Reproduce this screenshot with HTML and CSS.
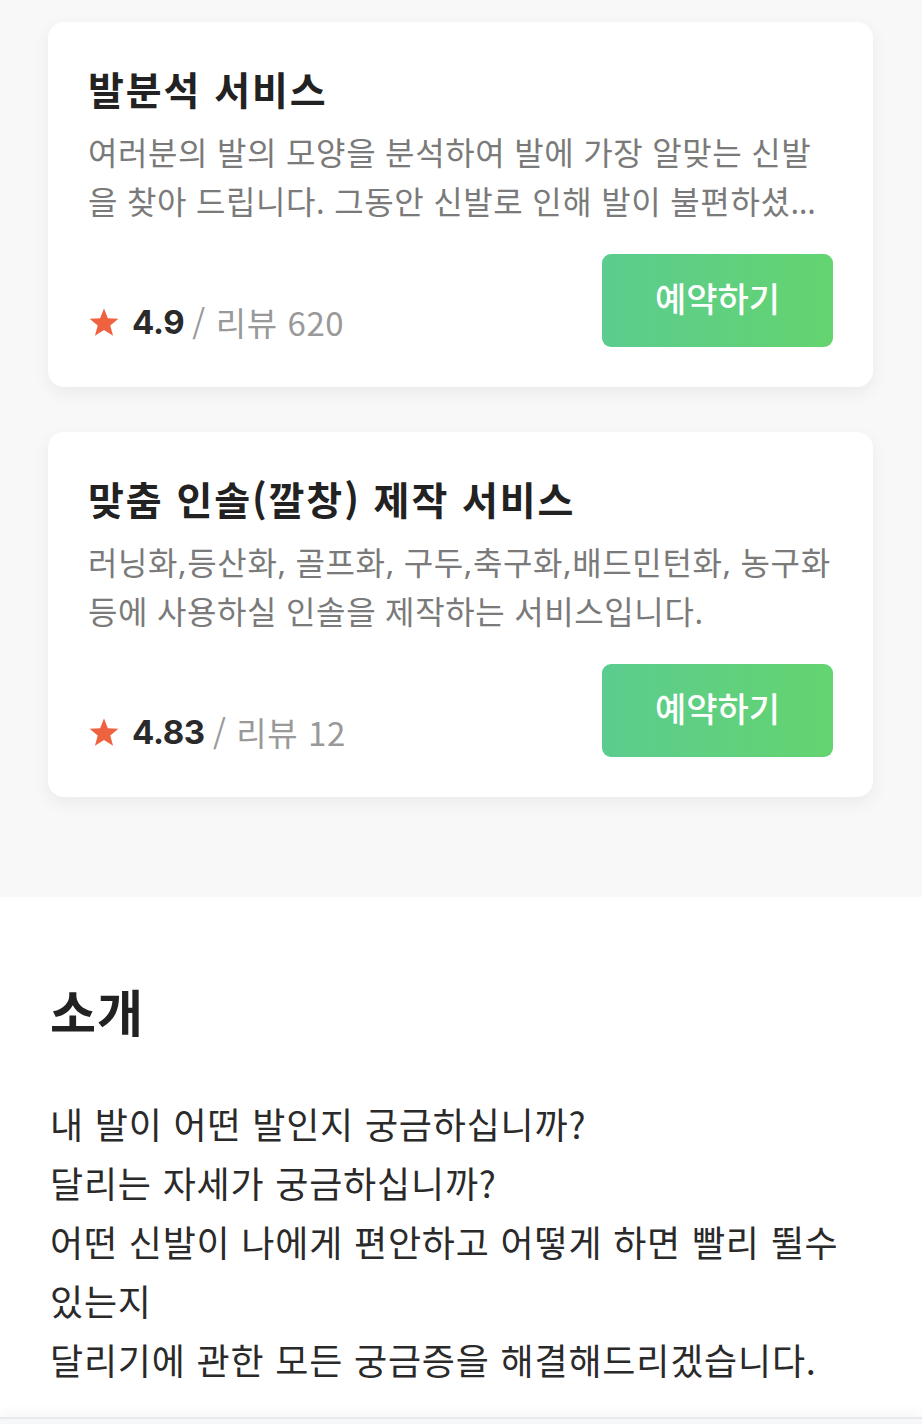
FILE: index.html
```html
<!DOCTYPE html>
<html lang="ko">
<head>
<meta charset="utf-8">
<link rel="stylesheet" href="styles.css">
</head>
<body>
<section class="services">
  <article class="card">
    <h2 class="card-title">발분석 서비스</h2>
    <p class="card-desc">여러분의 발의 모양을 분석하여 발에 가장 알맞는 신발을 찾아 드립니다. 그동안 신발로 인해 발이 불편하셨던 분들께 추천합니다.</p>
    <div class="card-foot">
      <div class="rating">
        <svg class="star" viewBox="0 0 24 24" width="32" height="32"><path d="M12 1.8l2.9 7.4 7.9.4-6.1 5 2.1 7.7L12 18l-6.8 4.3 2.1-7.7-6.1-5 7.9-.4z" fill="#ef6240"/></svg>
        <span class="score">4.9</span>
        <span class="reviews">/ 리뷰 620</span>
      </div>
      <button class="book">예약하기</button>
    </div>
  </article>
  <article class="card">
    <h2 class="card-title">맞춤 인솔(깔창) 제작 서비스</h2>
    <p class="card-desc">러닝화,등산화, 골프화, 구두,축구화,배드민턴화, 농구화<br>등에 사용하실 인솔을 제작하는 서비스입니다.</p>
    <div class="card-foot">
      <div class="rating">
        <svg class="star" viewBox="0 0 24 24" width="32" height="32"><path d="M12 1.8l2.9 7.4 7.9.4-6.1 5 2.1 7.7L12 18l-6.8 4.3 2.1-7.7-6.1-5 7.9-.4z" fill="#ef6240"/></svg>
        <span class="score">4.83</span>
        <span class="reviews">/ 리뷰 12</span>
      </div>
      <button class="book">예약하기</button>
    </div>
  </article>
</section>
<section class="intro">
  <h2 class="intro-title">소개</h2>
  <p class="intro-text">내 발이 어떤 발인지 궁금하십니까?<br>달리는 자세가 궁금하십니까?<br>어떤 신발이 나에게 편안하고 어떻게 하면 빨리 뛸수 있는지<br>달리기에 관한 모든 궁금증을 해결해드리겠습니다.</p>
</section>
<div class="bottom-bar"></div>
</body>
</html>
```

FILE: styles.css
```css
* { box-sizing: border-box; }
html, body { margin: 0; padding: 0; }
body {
  font-family: "Noto Sans CJK KR", "Noto Sans", sans-serif;
  background: #ffffff;
  color: #222222;
}
.services {
  background: #f8f8f8;
  padding: 22px 49px 100px 48px;
  display: flex;
  flex-direction: column;
  gap: 45px;
}
.card {
  background: #ffffff;
  border-radius: 16px;
  box-shadow: 0 6px 18px rgba(0, 0, 0, 0.06);
  padding: 40px 40px 40px 40px;
}
.card-title {
  margin: 0;
  font-size: 39px;
  line-height: 52px;
  font-weight: 700;
  color: #222222;
  letter-spacing: 1.9px;
}
.card-desc {
  margin: 14px 0 0 0;
  font-family: "Noto Sans", "Noto Sans CJK KR", sans-serif;
  font-size: 32px;
  line-height: 49px;
  color: #7a7a7a;
  letter-spacing: 0.6px;
  display: -webkit-box;
  -webkit-line-clamp: 2;
  -webkit-box-orient: vertical;
  overflow: hidden;
}
.card-foot {
  margin-top: 28px;
  display: flex;
  justify-content: space-between;
  align-items: flex-end;
}
.rating {
  display: flex;
  align-items: center;
  gap: 8px;
  height: 42px;
  margin-bottom: 4px;
}
.star { display: block; margin-right: 4px; }
.score {
  font-size: 33px;
  font-weight: 700;
  color: #2a2a2a;
  font-family: "Inter", "Noto Sans CJK KR", sans-serif;
  letter-spacing: -0.3px;
}
.reviews {
  font-size: 33px;
  color: #999999;
  letter-spacing: 0.6px;
}
.book {
  width: 231px;
  height: 93px;
  border: none;
  border-radius: 9px;
  background: linear-gradient(90deg, #5ccc8f 0%, #63d46f 100%);
  color: #ffffff;
  font-family: "Noto Sans CJK KR", sans-serif;
  font-size: 34px;
  font-weight: 500;
  letter-spacing: 0;
  padding: 0 0 6px 0;
}
.intro {
  padding: 82px 50px 28px 50px;
}
.intro-title {
  margin: 0;
  font-size: 50px;
  line-height: 62px;
  font-weight: 700;
  color: #222222;
  letter-spacing: 1px;
}
.intro-text {
  margin: 53px 0 0 0;
  font-size: 36px;
  line-height: 59px;
  color: #2a2a2a;
  letter-spacing: 0.8px;
}
.bottom-bar {
  height: 40px;
  background: #f6f7f9;
  border-top: 2px solid #e8e9ec;
  box-shadow: 0 -6px 10px rgba(0, 0, 0, 0.03);
}
```
